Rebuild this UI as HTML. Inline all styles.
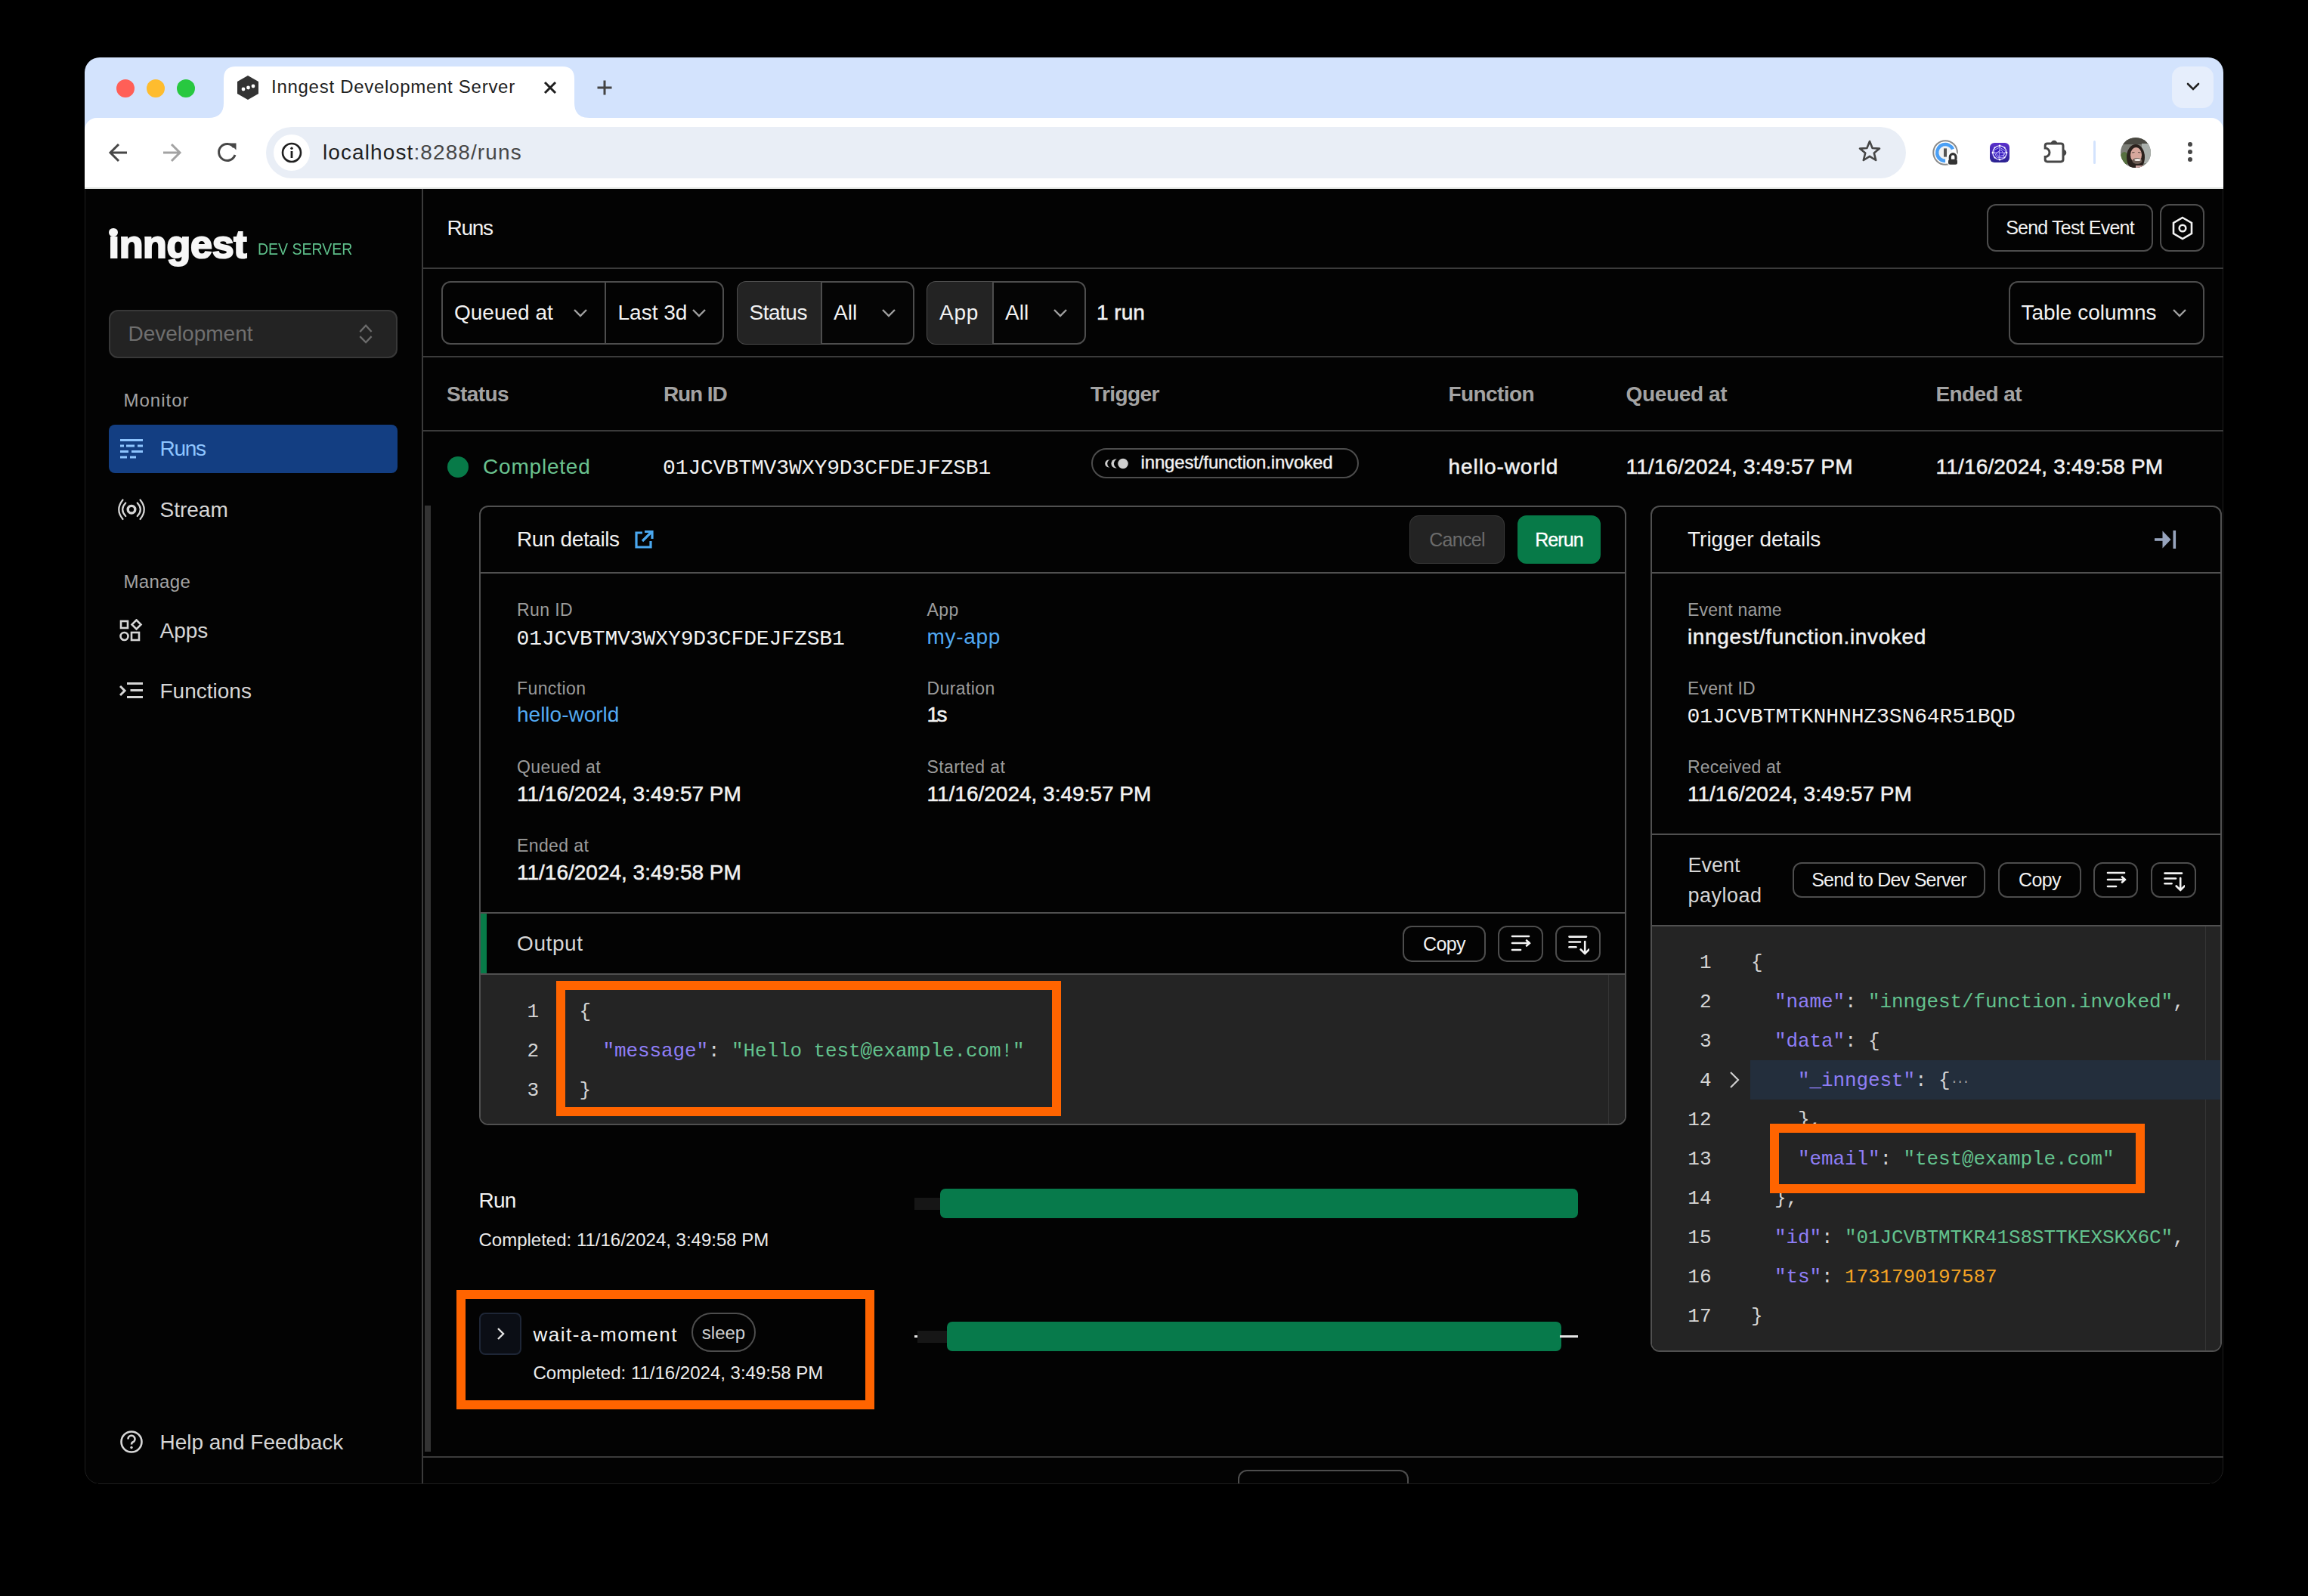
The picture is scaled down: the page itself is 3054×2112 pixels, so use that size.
<!DOCTYPE html>
<html><head><meta charset="utf-8"><title>Inngest Dev Server</title>
<style>
html,body{margin:0;padding:0;background:#000;width:3054px;height:2112px;overflow:hidden;}
.t{position:absolute;white-space:nowrap;}
.s{font-family:"Liberation Sans", sans-serif;}
.m{font-family:"Liberation Mono", monospace;}
.r{position:absolute;}
</style></head><body>
<div class="r" style="left:112.0px;top:76.0px;width:2830.0px;height:1888.0px;background:#030303;border:1px solid #1e1e1e;box-sizing:border-box;border-radius:20px;"></div><div class="r" style="left:112.0px;top:76.0px;width:2830.0px;height:124.0px;background:#d3e3fd;border-radius:20px 20px 0 0;"></div><div class="r" style="left:112.0px;top:156.0px;width:2830.0px;height:93.0px;background:#ffffff;border-radius:16px 16px 0 0;"></div><div class="r" style="left:112.0px;top:248.0px;width:2830.0px;height:2.0px;background:#e1e3e1;"></div><svg class="r" style="left:276px;top:88px;" width="504" height="68" viewBox="0 0 504 68"><path d="M0 68 Q20 68 20 48 L20 16 Q20 0 36 0 L468 0 Q484 0 484 16 L484 48 Q484 68 504 68 Z" fill="#fff"/></svg><div class="r" style="left:154.0px;top:105.0px;width:24.0px;height:24.0px;background:#ff5f57;border-radius:12px;"></div><div class="r" style="left:194.0px;top:105.0px;width:24.0px;height:24.0px;background:#febc2e;border-radius:12px;"></div><div class="r" style="left:234.0px;top:105.0px;width:24.0px;height:24.0px;background:#28c840;border-radius:12px;"></div><svg class="r" style="left:312px;top:99px;" width="32" height="34" viewBox="0 0 32 34"><path d="M16 1 L30 9 L30 25 L16 33 L2 25 L2 9 Z" fill="#333"/><circle cx="10" cy="19" r="2.4" fill="#fff"/><circle cx="16.5" cy="17" r="2.4" fill="#fff"/><circle cx="23" cy="15" r="2.4" fill="#fff"/></svg><div class="t s" style="left:359.0px;top:103.2px;font-size:24px;line-height:24px;color:#1f1f1f;letter-spacing:0.72px;">Inngest Development Server</div><svg class="r" style="left:718px;top:106px;" width="20" height="20" viewBox="0 0 20 20"><path d="M3 3 L17 17 M17 3 L3 17" stroke="#1f1f1f" stroke-width="3"/></svg><svg class="r" style="left:789px;top:105px;" width="22" height="22" viewBox="0 0 22 22"><path d="M11 1.5 L11 20.5 M1.5 11 L20.5 11" stroke="#444" stroke-width="3"/></svg><div class="r" style="left:2874.0px;top:88.0px;width:55.0px;height:55.0px;background:#e6eefc;border-radius:14px;"></div><svg class="r" style="left:2891px;top:107px;" width="22" height="16" viewBox="0 0 22 16"><path d="M4 4 L11 11 L18 4" stroke="#222" stroke-width="2.6" fill="none" stroke-linecap="round"/></svg><svg class="r" style="left:140px;top:186px;" width="34" height="32" viewBox="0 0 34 32"><path d="M28 16 L6 16 M17 5 L6 16 L17 27" stroke="#474747" stroke-width="3" fill="none"/></svg><svg class="r" style="left:212px;top:186px;" width="34" height="32" viewBox="0 0 34 32"><path d="M4 16 L26 16 M15 5 L26 16 L15 27" stroke="#a3a3a3" stroke-width="3" fill="none"/></svg><svg class="r" style="left:284px;top:186px;" width="34" height="32" viewBox="0 0 34 32"><path d="M25.5 9 A11 11 0 1 0 27 19" stroke="#474747" stroke-width="3" fill="none"/><path d="M19.5 3.5 L28.5 3.5 L28.5 12.5 Z" fill="#474747"/></svg><div class="r" style="left:352.0px;top:168.0px;width:2170.0px;height:68.0px;background:#e9eef6;border-radius:34px;"></div><div class="r" style="left:362.0px;top:178.0px;width:48.0px;height:48.0px;background:#ffffff;border-radius:24px;"></div><svg class="r" style="left:372px;top:188px;" width="28" height="28" viewBox="0 0 28 28"><circle cx="14" cy="14" r="12" stroke="#1f1f1f" stroke-width="2.6" fill="none"/><rect x="12.6" y="12" width="2.8" height="9" fill="#1f1f1f"/><circle cx="14" cy="8.3" r="1.7" fill="#1f1f1f"/></svg><div class="t s" style="left:427px;top:188.0px;font-size:28px;line-height:28px;letter-spacing:1.1px;color:#1f1f1f;">localhost<span style="color:#474747">:8288/runs</span></div><svg class="r" style="left:2458px;top:184px;" width="32" height="32" viewBox="0 0 32 32"><path d="M16 3 L19.6 12 L29 12.6 L21.8 18.6 L24.2 28 L16 22.8 L7.8 28 L10.2 18.6 L3 12.6 L12.4 12 Z" stroke="#474747" stroke-width="2.6" fill="none" stroke-linejoin="round"/></svg><svg class="r" style="left:2556px;top:183px;" width="40" height="40" viewBox="0 0 40 40"><circle cx="18.1" cy="19" r="15.8" stroke="#8a8a8a" stroke-width="2" fill="#fff"/><circle cx="18.1" cy="19" r="9" fill="#f2f2f2"/><path d="M28.07 14.35 A11 11 0 1 0 18.1 30" stroke="#4a9ff5" stroke-width="4.5" fill="none"/><rect x="16" y="13.4" width="4" height="11.2" fill="#555"/><path d="M24.3 28 V24.5 A3.85 3.85 0 0 1 32 24.5 V28" stroke="#fff" stroke-width="7" fill="none"/><rect x="21" y="26.7" width="14" height="9" rx="3" fill="#fff"/><path d="M24.3 28 V24.5 A3.85 3.85 0 0 1 32 24.5 V28" stroke="#333" stroke-width="3.2" fill="none"/><rect x="22" y="27.7" width="12" height="7" rx="2.5" fill="#333"/></svg><div class="r" style="left:2633.0px;top:189.0px;width:26.0px;height:26.0px;background:linear-gradient(#5a2fcc,#2a2290);border-radius:6px;"></div><svg class="r" style="left:2633px;top:189px;" width="26" height="26" viewBox="0 0 26 26"><circle cx="13" cy="13" r="9.2" fill="#3a1fc0" stroke="#e2dcff" stroke-width="1.3"/><path d="M5 10 L13 6 L21 11 L17 20 L9 19 Z M8 14 L15 9 L19 16 L12 18 Z M13 4 L12 22 M4 13 L22 13" stroke="#cfc6ff" stroke-width="0.8" fill="none"/><g fill="#fff"><circle cx="13" cy="3.8" r="1.2"/><circle cx="13" cy="22.2" r="1.2"/><circle cx="3.8" cy="13" r="1.2"/><circle cx="22.2" cy="13" r="1.2"/><circle cx="6.5" cy="6.5" r="1"/><circle cx="19.5" cy="6.5" r="1"/><circle cx="6.5" cy="19.5" r="1"/><circle cx="19.5" cy="19.5" r="1"/></g></svg><svg class="r" style="left:2700px;top:180px;" width="40" height="40" viewBox="0 0 40 40"><path d="M9 10.1 H27 Q30 10.1 30 13 V31 Q30 33.9 27 33.9 H9 Q6.2 33.9 6.2 31 V27.6 A5.8 5.8 0 0 0 6.2 16 V13 Q6.2 10.1 9 10.1 Z" stroke="#474747" stroke-width="3" fill="none"/><path d="M13.7 10.1 A4.3 4.3 0 0 1 22.3 10.1 Z" fill="#474747"/><path d="M30 17.7 A4.3 4.3 0 0 1 30 26.3 Z" fill="#474747"/></svg><div class="r" style="left:2770.0px;top:186.0px;width:3.0px;height:31.0px;background:#d3e3fd;border-radius:2px;"></div><svg class="r" style="left:2806px;top:182px;filter:blur(0.5px);" width="40" height="40" viewBox="0 0 40 40"><defs><clipPath id="av"><circle cx="20" cy="20" r="20"/></clipPath></defs><g clip-path="url(#av)"><rect width="40" height="40" fill="#7b7d76"/><rect x="0" y="0" width="40" height="9" fill="#4a4942"/><rect x="28" y="8" width="12" height="26" fill="#aab0ac"/><ellipse cx="5" cy="28" rx="6" ry="9" fill="#56703f"/><ellipse cx="20" cy="26" rx="12" ry="17" fill="#2a211d"/><ellipse cx="20.5" cy="23" rx="7.5" ry="10" fill="#d7a79c"/><ellipse cx="22" cy="31" rx="6.5" ry="4" fill="#6d5d55"/><ellipse cx="22.5" cy="29.5" rx="4.2" ry="1.6" fill="#f2ece8"/><path d="M15 20 L18.5 19.5 M23 19.5 L26.5 20" stroke="#5b4a44" stroke-width="1.2"/><rect x="20" y="37" width="14" height="5" fill="#c9a3a0"/></g></svg><div class="r" style="left:2895.0px;top:188.0px;width:6.0px;height:6.0px;background:#474747;border-radius:3px;"></div><div class="r" style="left:2895.0px;top:198.0px;width:6.0px;height:6.0px;background:#474747;border-radius:3px;"></div><div class="r" style="left:2895.0px;top:208.0px;width:6.0px;height:6.0px;background:#474747;border-radius:3px;"></div><div class="r" style="left:558.0px;top:250.0px;width:2.0px;height:1713.0px;background:#3b3b3b;"></div><div class="t s" style="left:143.5px;top:296.5px;font-size:52px;line-height:52px;color:#f6f6f6;font-weight:700;letter-spacing:-0.3px;-webkit-text-stroke:2.2px #f6f6f6;">inngest</div><div class="r" style="left:142.0px;top:299.0px;width:16.0px;height:13.0px;background:#030303;"></div><div class="r" style="left:144.4px;top:301.7px;width:11.4px;height:11.4px;background:#f6f6f6;border-radius:6px;"></div><div class="t s" style="left:340.5px;top:318.4px;font-size:22.7px;line-height:22.7px;color:#5ebf8a;transform:scaleX(0.86);transform-origin:0 0;">DEV SERVER</div><div class="r" style="left:144.0px;top:410.0px;width:382.0px;height:64.0px;background:#232323;border:2px solid #383838;box-sizing:border-box;border-radius:12px;"></div><div class="t s" style="left:169.5px;top:428.3px;font-size:28px;line-height:28px;color:#6f6f6f;">Development</div><svg class="r" style="left:474px;top:428px;" width="20" height="28" viewBox="0 0 20 28"><path d="M2.3 11.1 L10.1 2.8 L17.6 11.1 M2.3 17.1 L10.1 25.1 L17.6 17.1" stroke="#6b6b6b" stroke-width="2.3" fill="none"/></svg><div class="t s" style="left:163.5px;top:517.7px;font-size:24px;line-height:24px;color:#a3a3a3;letter-spacing:1.0px;">Monitor</div><div class="r" style="left:144.0px;top:562.0px;width:382.0px;height:64.0px;background:#133e82;border-radius:8px;"></div><svg class="r" style="left:158px;top:580px;" width="32" height="28" viewBox="0 0 32 28"><g stroke="#8ec5ff" stroke-width="3"><path d="M1 2.5 H31"/><path d="M1 10 H6 M9 10 H20 M24 10 H31"/><path d="M1 17.5 H12 M16 17.5 H31"/><path d="M1 25 H10 M14 25 H22"/></g></svg><div class="t s" style="left:211.5px;top:580.3px;font-size:28px;line-height:28px;color:#8ec5ff;letter-spacing:-1.3px;">Runs</div><svg class="r" style="left:150px;top:655px;" width="50" height="40" viewBox="0 0 50 40"><circle cx="24" cy="19.2" r="4.8" stroke="#d6d6d6" stroke-width="3.4" fill="none"/><path d="M16.3 10.5 Q7.9 19.25 16.3 28 M31.7 10.5 Q40.1 19.25 31.7 28" stroke="#d6d6d6" stroke-width="2.2" fill="none" stroke-linecap="round"/><path d="M12.5 6.5 Q2 19.25 12.5 32 M35.5 6.5 Q46 19.25 35.5 32" stroke="#d6d6d6" stroke-width="2.2" fill="none" stroke-linecap="round"/></svg><div class="t s" style="left:211.5px;top:660.8px;font-size:28px;line-height:28px;color:#d6d6d6;">Stream</div><div class="t s" style="left:163.5px;top:757.7px;font-size:24px;line-height:24px;color:#a3a3a3;letter-spacing:0.3px;">Manage</div><svg class="r" style="left:158px;top:819px;" width="32" height="32" viewBox="0 0 32 32"><g stroke="#d6d6d6" stroke-width="2.6" fill="none"><rect x="2" y="3" width="9" height="9"/><path d="M22.5 1.5 L28.5 7.5 L22.5 13.5 L16.5 7.5 Z"/><circle cx="6.5" cy="23" r="5"/><rect x="16" y="18" width="10" height="10"/></g></svg><div class="t s" style="left:211.5px;top:820.8px;font-size:28px;line-height:28px;color:#d6d6d6;">Apps</div><svg class="r" style="left:158px;top:902px;" width="34" height="26" viewBox="0 0 34 26"><g stroke="#d6d6d6" stroke-width="3" fill="none"><path d="M1 6 L7 12 L1 18"/><path d="M10 2.5 H31 M14.5 11.5 H31 M10 20.5 H31"/></g></svg><div class="t s" style="left:211.5px;top:900.8px;font-size:28px;line-height:28px;color:#d6d6d6;">Functions</div><svg class="r" style="left:158px;top:1892px;" width="32" height="32" viewBox="0 0 32 32"><circle cx="16" cy="16" r="13.5" stroke="#d6d6d6" stroke-width="2.6" fill="none"/><path d="M11.5 12.5 A4.5 4.5 0 1 1 17.5 16.5 Q16 17.3 16 19.5" stroke="#d6d6d6" stroke-width="2.6" fill="none"/><circle cx="16" cy="23.5" r="1.7" fill="#d6d6d6"/></svg><div class="t s" style="left:211.5px;top:1895.3px;font-size:28px;line-height:28px;color:#d6d6d6;">Help and Feedback</div><div class="t s" style="left:591.5px;top:288.3px;font-size:28px;line-height:28px;color:#f2f2f2;letter-spacing:-1.3px;">Runs</div><div class="r" style="left:560.0px;top:354.0px;width:2382.0px;height:2.0px;background:#3b3b3b;"></div><div class="r" style="left:2629.0px;top:270.0px;width:220.0px;height:63.0px;border:2px solid #4d4d4d;box-sizing:border-box;border-radius:12px;"></div><div class="t s" style="left:2739.0px;top:288.8px;font-size:25px;line-height:25px;color:#f2f2f2;letter-spacing:-0.8px;transform:translateX(-50%);">Send Test Event</div><div class="r" style="left:2858.0px;top:270.0px;width:59.0px;height:63.0px;border:2px solid #4d4d4d;box-sizing:border-box;border-radius:12px;"></div><svg class="r" style="left:2873px;top:286px;" width="30" height="32" viewBox="0 0 30 32"><path d="M15 2 L27 9 L27 23 L15 30 L3 23 L3 9 Z" stroke="#f2f2f2" stroke-width="2.6" fill="none" stroke-linejoin="miter"/><circle cx="15" cy="16" r="4.3" stroke="#f2f2f2" stroke-width="2.6" fill="none"/></svg><div class="r" style="left:584.0px;top:372.0px;width:374.0px;height:84.0px;border:2px solid #4d4d4d;box-sizing:border-box;border-radius:12px;"></div><div class="r" style="left:800.0px;top:372.0px;width:2.0px;height:84.0px;background:#4d4d4d;"></div><div class="t s" style="left:601.0px;top:400.3px;font-size:28px;line-height:28px;color:#f2f2f2;">Queued at</div><svg class="r" style="left:758px;top:407px;" width="20" height="14" viewBox="0 0 20 14"><path d="M2.0 3 L10 11.0 L18.0 3" stroke="#a0a0a0" stroke-width="2.4" fill="none"/></svg><div class="t s" style="left:817.5px;top:400.3px;font-size:28px;line-height:28px;color:#f2f2f2;">Last 3d</div><svg class="r" style="left:915px;top:407px;" width="20" height="14" viewBox="0 0 20 14"><path d="M2.0 3 L10 11.0 L18.0 3" stroke="#a0a0a0" stroke-width="2.4" fill="none"/></svg><div class="r" style="left:975.0px;top:372.0px;width:235.0px;height:84.0px;background:#050505;border:2px solid #4d4d4d;box-sizing:border-box;border-radius:12px;"></div><div class="r" style="left:976.0px;top:373.0px;width:111.0px;height:82.0px;background:#232323;border-radius:11px 0 0 11px;"></div><div class="r" style="left:1086.0px;top:372.0px;width:2.0px;height:84.0px;background:#4d4d4d;"></div><div class="t s" style="left:991.5px;top:400.3px;font-size:28px;line-height:28px;color:#f2f2f2;letter-spacing:-0.5px;">Status</div><div class="t s" style="left:1103.0px;top:400.3px;font-size:28px;line-height:28px;color:#f2f2f2;">All</div><svg class="r" style="left:1166px;top:407px;" width="20" height="14" viewBox="0 0 20 14"><path d="M2.0 3 L10 11.0 L18.0 3" stroke="#a0a0a0" stroke-width="2.4" fill="none"/></svg><div class="r" style="left:1226.0px;top:372.0px;width:211.0px;height:84.0px;background:#050505;border:2px solid #4d4d4d;box-sizing:border-box;border-radius:12px;"></div><div class="r" style="left:1227.0px;top:373.0px;width:87.0px;height:82.0px;background:#232323;border-radius:11px 0 0 11px;"></div><div class="r" style="left:1313.0px;top:372.0px;width:2.0px;height:84.0px;background:#4d4d4d;"></div><div class="t s" style="left:1243.0px;top:400.3px;font-size:28px;line-height:28px;color:#f2f2f2;letter-spacing:0.7px;">App</div><div class="t s" style="left:1330.0px;top:400.3px;font-size:28px;line-height:28px;color:#f2f2f2;">All</div><svg class="r" style="left:1393px;top:407px;" width="20" height="14" viewBox="0 0 20 14"><path d="M2.0 3 L10 11.0 L18.0 3" stroke="#a0a0a0" stroke-width="2.4" fill="none"/></svg><div class="t s" style="left:1451.0px;top:400.3px;font-size:28px;line-height:28px;color:#f2f2f2;-webkit-text-stroke:0.5px #f2f2f2;">1 run</div><div class="r" style="left:2658.0px;top:372.0px;width:259.0px;height:84.0px;border:2px solid #4d4d4d;box-sizing:border-box;border-radius:12px;"></div><div class="t s" style="left:2674.5px;top:400.3px;font-size:28px;line-height:28px;color:#f2f2f2;">Table columns</div><svg class="r" style="left:2874px;top:407px;" width="20" height="14" viewBox="0 0 20 14"><path d="M2.0 3 L10 11.0 L18.0 3" stroke="#a0a0a0" stroke-width="2.4" fill="none"/></svg><div class="r" style="left:560.0px;top:471.0px;width:2382.0px;height:2.0px;background:#3b3b3b;"></div><div class="t s" style="left:591.0px;top:508.3px;font-size:28px;line-height:28px;color:#a3a3a3;font-weight:700;letter-spacing:-0.6px;">Status</div><div class="t s" style="left:878.0px;top:508.3px;font-size:28px;line-height:28px;color:#a3a3a3;font-weight:700;letter-spacing:-1.1px;">Run ID</div><div class="t s" style="left:1443.0px;top:508.3px;font-size:28px;line-height:28px;color:#a3a3a3;font-weight:700;letter-spacing:-0.6px;">Trigger</div><div class="t s" style="left:1916.5px;top:508.3px;font-size:28px;line-height:28px;color:#a3a3a3;font-weight:700;letter-spacing:-0.6px;">Function</div><div class="t s" style="left:2151.5px;top:508.3px;font-size:28px;line-height:28px;color:#a3a3a3;font-weight:700;letter-spacing:-0.35px;">Queued at</div><div class="t s" style="left:2561.5px;top:508.3px;font-size:28px;line-height:28px;color:#a3a3a3;font-weight:700;letter-spacing:-0.6px;">Ended at</div><div class="r" style="left:560.0px;top:569.0px;width:2382.0px;height:2.0px;background:#3b3b3b;"></div><div class="r" style="left:592.0px;top:604.0px;width:28.0px;height:28.0px;background:#077a48;border-radius:14px;"></div><div class="t s" style="left:639.0px;top:603.8px;font-size:28px;line-height:28px;color:#6ac28f;letter-spacing:0.8px;">Completed</div><div class="t m" style="left:877.0px;top:606.1px;font-size:28px;line-height:28px;color:#f2f2f2;letter-spacing:-0.1px;">01JCVBTMV3WXY9D3CFDEJFZSB1</div><div class="r" style="left:1444.0px;top:593.0px;width:354.0px;height:40.0px;border:2px solid #4d4d4d;box-sizing:border-box;border-radius:20px;"></div><svg class="r" style="left:1456px;top:603px;" width="44" height="22" viewBox="0 0 44 22"><circle cx="11.2" cy="10.5" r="5" fill="#d0d0d0"/><circle cx="14.7" cy="10.5" r="5.5" fill="#030303"/><circle cx="20.4" cy="10.5" r="6" fill="#d0d0d0"/><circle cx="24.4" cy="10.5" r="6.5" fill="#030303"/><circle cx="30" cy="10.5" r="7.4" fill="#d0d0d0" stroke="#030303" stroke-width="1.2"/></svg><div class="t s" style="left:1509.5px;top:600.2px;font-size:24px;line-height:24px;color:#f2f2f2;letter-spacing:-0.15px;-webkit-text-stroke:0.4px #f2f2f2;">inngest/function.invoked</div><div class="t s" style="left:1916.5px;top:603.8px;font-size:28px;line-height:28px;color:#f2f2f2;letter-spacing:0.95px;-webkit-text-stroke:0.5px #f2f2f2;">hello-world</div><div class="t s" style="left:2151.5px;top:603.8px;font-size:28px;line-height:28px;color:#f2f2f2;letter-spacing:0.15px;-webkit-text-stroke:0.5px #f2f2f2;">11/16/2024, 3:49:57 PM</div><div class="t s" style="left:2561.5px;top:603.8px;font-size:28px;line-height:28px;color:#f2f2f2;letter-spacing:0.18px;-webkit-text-stroke:0.5px #f2f2f2;">11/16/2024, 3:49:58 PM</div><div class="r" style="left:562.0px;top:669.0px;width:8.0px;height:1252.0px;background:#333333;"></div><div class="r" style="left:634.0px;top:669.0px;width:1518.0px;height:820.0px;border:2px solid #505050;box-sizing:border-box;border-radius:12px;"></div><div class="t s" style="left:684.0px;top:700.3px;font-size:28px;line-height:28px;color:#f2f2f2;letter-spacing:-0.4px;">Run details</div><svg class="r" style="left:838px;top:700px;" width="28" height="28" viewBox="0 0 28 28"><path d="M12 5 L4 5 L4 24 L23 24 L23 16" stroke="#4aa8f0" stroke-width="3.2" fill="none"/><path d="M12 16 L24 4 M15 3.5 L25 3.5 L25 13" stroke="#4aa8f0" stroke-width="3.2" fill="none"/></svg><div class="r" style="left:1865.0px;top:682.0px;width:126.0px;height:64.0px;background:#232323;border:1.5px solid #3a3a3a;box-sizing:border-box;border-radius:12px;"></div><div class="t s" style="left:1928.0px;top:701.8px;font-size:25px;line-height:25px;color:#6b6b6b;letter-spacing:-0.7px;transform:translateX(-50%);">Cancel</div><div class="r" style="left:2008.0px;top:682.0px;width:110.0px;height:64.0px;background:#077a48;border-radius:12px;"></div><div class="t s" style="left:2063.0px;top:701.8px;font-size:25px;line-height:25px;color:#ffffff;letter-spacing:-0.9px;transform:translateX(-50%);-webkit-text-stroke:0.3px #fff;">Rerun</div><div class="r" style="left:636.0px;top:757.0px;width:1514.0px;height:2.0px;background:#505050;"></div><div class="t s" style="left:684.0px;top:795.5px;font-size:23px;line-height:23px;color:#9b9b9b;letter-spacing:0.4px;">Run ID</div><div class="t m" style="left:683.5px;top:831.6px;font-size:28px;line-height:28px;color:#f2f2f2;letter-spacing:-0.1px;">01JCVBTMV3WXY9D3CFDEJFZSB1</div><div class="t s" style="left:1226.5px;top:795.5px;font-size:23px;line-height:23px;color:#9b9b9b;letter-spacing:0.4px;">App</div><div class="t s" style="left:1226.5px;top:829.3px;font-size:28px;line-height:28px;color:#52a9f2;letter-spacing:0.7px;">my-app</div><div class="t s" style="left:684.0px;top:899.5px;font-size:23px;line-height:23px;color:#9b9b9b;letter-spacing:0.4px;">Function</div><div class="t s" style="left:684.0px;top:932.3px;font-size:28px;line-height:28px;color:#52a9f2;">hello-world</div><div class="t s" style="left:1226.5px;top:899.5px;font-size:23px;line-height:23px;color:#9b9b9b;letter-spacing:0.4px;">Duration</div><div class="t s" style="left:1226.5px;top:932.3px;font-size:28px;line-height:28px;color:#f2f2f2;letter-spacing:-2.5px;-webkit-text-stroke:0.5px #f2f2f2;">1s</div><div class="t s" style="left:684.0px;top:1003.5px;font-size:23px;line-height:23px;color:#9b9b9b;letter-spacing:0.4px;">Queued at</div><div class="t s" style="left:684.0px;top:1037.3px;font-size:28px;line-height:28px;color:#f2f2f2;-webkit-text-stroke:0.5px #f2f2f2;">11/16/2024, 3:49:57 PM</div><div class="t s" style="left:1226.5px;top:1003.5px;font-size:23px;line-height:23px;color:#9b9b9b;letter-spacing:0.4px;">Started at</div><div class="t s" style="left:1226.5px;top:1037.3px;font-size:28px;line-height:28px;color:#f2f2f2;-webkit-text-stroke:0.5px #f2f2f2;">11/16/2024, 3:49:57 PM</div><div class="t s" style="left:684.0px;top:1107.5px;font-size:23px;line-height:23px;color:#9b9b9b;letter-spacing:0.4px;">Ended at</div><div class="t s" style="left:684.0px;top:1141.3px;font-size:28px;line-height:28px;color:#f2f2f2;-webkit-text-stroke:0.5px #f2f2f2;">11/16/2024, 3:49:58 PM</div><div class="r" style="left:636.0px;top:1207.0px;width:1514.0px;height:2.0px;background:#505050;"></div><div class="r" style="left:636.0px;top:1209.0px;width:8.0px;height:80.0px;background:#077a48;"></div><div class="t s" style="left:684.0px;top:1235.3px;font-size:28px;line-height:28px;color:#d6d6d6;letter-spacing:0.6px;">Output</div><div class="r" style="left:1856.0px;top:1225.0px;width:110.0px;height:48.0px;border:2px solid #4d4d4d;box-sizing:border-box;border-radius:12px;"></div><div class="t s" style="left:1911.0px;top:1236.8px;font-size:25px;line-height:25px;color:#f2f2f2;letter-spacing:-0.6px;transform:translateX(-50%);">Copy</div><div class="r" style="left:1982.0px;top:1225.0px;width:60.0px;height:48.0px;border:2px solid #4d4d4d;box-sizing:border-box;border-radius:12px;"></div><svg class="r" style="left:1999px;top:1236px;" width="28" height="26" viewBox="0 0 28 26"><g stroke="#f2f2f2" stroke-width="2.6" fill="none" stroke-linecap="round"><path d="M2 3 H24"/><path d="M2 12 H25 M21 8.5 L25 12 L21 15.5"/><path d="M2 21 H13"/></g></svg><div class="r" style="left:2058.0px;top:1225.0px;width:60.0px;height:48.0px;border:2px solid #4d4d4d;box-sizing:border-box;border-radius:12px;"></div><svg class="r" style="left:2073px;top:1235px;" width="30" height="30" viewBox="0 0 30 30"><g stroke="#f2f2f2" stroke-width="2.6" fill="none" stroke-linecap="round"><path d="M3.5 4.6 H26"/><path d="M3.5 11.5 H18"/><path d="M3.5 18.3 H12.5"/><path d="M24.2 11 V27 M18.7 21.5 L24.2 27 L29.7 21.5"/></g></svg><div class="r" style="left:636.0px;top:1289.0px;width:1514.0px;height:198.0px;background:#242424;border-radius:0 0 10px 10px;"></div><div class="r" style="left:636.0px;top:1288.0px;width:1514.0px;height:2.0px;background:#505050;"></div><div class="r" style="left:2128.0px;top:1290.0px;width:1.0px;height:197.0px;background:#353535;"></div><div class="t m" style="right:2341.0px;top:1325.6px;font-size:26px;line-height:26px;color:#d6d6d6;">1</div><div class="t m" style="left:766.5px;top:1325.6px;font-size:26px;line-height:26px;color:#d6d6d6;letter-spacing:-0.1px;">{</div><div class="t m" style="right:2341.0px;top:1377.8px;font-size:26px;line-height:26px;color:#d6d6d6;">2</div><div class="t m" style="left:766.5px;top:1377.8px;font-size:26px;line-height:26px;color:#d6d6d6;letter-spacing:-0.1px;">&nbsp;&nbsp;<span style="color:#8f7ef6">"message"</span>: <span style="color:#63c28e">"Hello test@example.com!"</span></div><div class="t m" style="right:2341.0px;top:1430.1px;font-size:26px;line-height:26px;color:#d6d6d6;">3</div><div class="t m" style="left:766.5px;top:1430.1px;font-size:26px;line-height:26px;color:#d6d6d6;letter-spacing:-0.1px;">}</div><div class="t s" style="left:633.5px;top:1575.3px;font-size:28px;line-height:28px;color:#f2f2f2;letter-spacing:-0.8px;">Run</div><div class="t s" style="left:633.5px;top:1628.7px;font-size:24px;line-height:24px;color:#ececec;">Completed: 11/16/2024, 3:49:58 PM</div><div class="r" style="left:1210.0px;top:1585.0px;width:36.0px;height:16.0px;background:#161616;"></div><div class="r" style="left:1244.0px;top:1573.0px;width:844.0px;height:39.0px;background:#077a4b;border-radius:7px;"></div><div class="r" style="left:634.0px;top:1737.0px;width:56.0px;height:56.0px;background:#0b0e15;border:2px solid #1e2636;box-sizing:border-box;border-radius:8px;"></div><svg class="r" style="left:652px;top:1755px;" width="20" height="20" viewBox="0 0 20 20"><path d="M7 3 L14 10 L7 17" stroke="#e5e5e5" stroke-width="2.4" fill="none"/></svg><div class="t s" style="left:705.5px;top:1753.0px;font-size:26px;line-height:26px;color:#f2f2f2;letter-spacing:1.5px;">wait-a-moment</div><div class="r" style="left:915.0px;top:1737.0px;width:85.0px;height:52.0px;border:2px solid #4d4d4d;box-sizing:border-box;border-radius:26px;"></div><div class="t s" style="left:957.5px;top:1751.7px;font-size:24px;line-height:24px;color:#cfcfcf;transform:translateX(-50%);">sleep</div><div class="t s" style="left:705.5px;top:1804.7px;font-size:24px;line-height:24px;color:#ececec;">Completed: 11/16/2024, 3:49:58 PM</div><div class="r" style="left:1210.0px;top:1767.0px;width:6.0px;height:2.5px;background:#e5e5e5;"></div><div class="r" style="left:1214.0px;top:1761.0px;width:41.0px;height:16.0px;background:#161616;"></div><div class="r" style="left:1253.0px;top:1749.0px;width:813.0px;height:39.0px;background:#077a4b;border-radius:7px;"></div><div class="r" style="left:2064.0px;top:1767.0px;width:24.0px;height:2.5px;background:#e5e5e5;"></div><div class="r" style="left:2184.0px;top:669.0px;width:756.0px;height:1120.0px;border:2px solid #505050;box-sizing:border-box;border-radius:12px;"></div><div class="t s" style="left:2233.0px;top:700.3px;font-size:28px;line-height:28px;color:#f2f2f2;">Trigger details</div><svg class="r" style="left:2849px;top:700px;" width="34" height="28" viewBox="0 0 34 28"><path d="M2 14 H13" stroke="#97a4bd" stroke-width="3.6"/><path d="M12.5 2.5 L23.5 14 L12.5 25.5 Z" fill="#97a4bd"/><rect x="26.5" y="2" width="3.6" height="24" fill="#97a4bd"/></svg><div class="r" style="left:2186.0px;top:757.0px;width:752.0px;height:2.0px;background:#505050;"></div><div class="t s" style="left:2233.0px;top:795.5px;font-size:23px;line-height:23px;color:#9b9b9b;letter-spacing:0.2px;">Event name</div><div class="t s" style="left:2233.0px;top:829.3px;font-size:28px;line-height:28px;color:#f2f2f2;letter-spacing:0.65px;-webkit-text-stroke:0.5px #f2f2f2;">inngest/function.invoked</div><div class="t s" style="left:2233.0px;top:899.5px;font-size:23px;line-height:23px;color:#9b9b9b;letter-spacing:0.2px;">Event ID</div><div class="t m" style="left:2232.5px;top:934.6px;font-size:28px;line-height:28px;color:#f2f2f2;letter-spacing:-0.1px;">01JCVBTMTKNHNHZ3SN64R51BQD</div><div class="t s" style="left:2233.0px;top:1003.5px;font-size:23px;line-height:23px;color:#9b9b9b;letter-spacing:0.2px;">Received at</div><div class="t s" style="left:2233.0px;top:1037.3px;font-size:28px;line-height:28px;color:#f2f2f2;-webkit-text-stroke:0.5px #f2f2f2;">11/16/2024, 3:49:57 PM</div><div class="r" style="left:2186.0px;top:1103.0px;width:752.0px;height:2.0px;background:#505050;"></div><div class="t s" style="left:2233.5px;top:1132.1px;font-size:27px;line-height:27px;color:#d6d6d6;">Event</div><div class="t s" style="left:2233.5px;top:1171.9px;font-size:27px;line-height:27px;color:#d6d6d6;letter-spacing:0.5px;">payload</div><div class="r" style="left:2372.0px;top:1141.0px;width:255.0px;height:47.0px;border:2px solid #4d4d4d;box-sizing:border-box;border-radius:12px;"></div><div class="t s" style="left:2499.5px;top:1151.8px;font-size:25px;line-height:25px;color:#f2f2f2;letter-spacing:-0.75px;transform:translateX(-50%);">Send to Dev Server</div><div class="r" style="left:2644.0px;top:1141.0px;width:110.0px;height:47.0px;border:2px solid #4d4d4d;box-sizing:border-box;border-radius:12px;"></div><div class="t s" style="left:2699.0px;top:1151.8px;font-size:25px;line-height:25px;color:#f2f2f2;letter-spacing:-0.6px;transform:translateX(-50%);">Copy</div><div class="r" style="left:2770.0px;top:1141.0px;width:59.0px;height:47.0px;border:2px solid #4d4d4d;box-sizing:border-box;border-radius:12px;"></div><svg class="r" style="left:2787px;top:1152px;" width="28" height="26" viewBox="0 0 28 26"><g stroke="#f2f2f2" stroke-width="2.6" fill="none" stroke-linecap="round"><path d="M2 3 H24"/><path d="M2 12 H25 M21 8.5 L25 12 L21 15.5"/><path d="M2 21 H13"/></g></svg><div class="r" style="left:2846.0px;top:1141.0px;width:60.0px;height:47.0px;border:2px solid #4d4d4d;box-sizing:border-box;border-radius:12px;"></div><svg class="r" style="left:2861px;top:1151px;" width="30" height="30" viewBox="0 0 30 30"><g stroke="#f2f2f2" stroke-width="2.6" fill="none" stroke-linecap="round"><path d="M3.5 4.6 H26"/><path d="M3.5 11.5 H18"/><path d="M3.5 18.3 H12.5"/><path d="M24.2 11 V27 M18.7 21.5 L24.2 27 L29.7 21.5"/></g></svg><div class="r" style="left:2186.0px;top:1225.0px;width:752.0px;height:562.0px;background:#242424;border-radius:0 0 10px 10px;"></div><div class="r" style="left:2186.0px;top:1224.0px;width:752.0px;height:2.0px;background:#505050;"></div><div class="r" style="left:2918.0px;top:1226.0px;width:1.0px;height:561.0px;background:#353535;"></div><div class="r" style="left:2316.0px;top:1403.0px;width:622.0px;height:52.0px;background:#232e3c;"></div><div class="t m" style="right:789.5px;top:1261.1px;font-size:26px;line-height:26px;color:#d6d6d6;">1</div><div class="t m" style="left:2316.9px;top:1261.1px;font-size:26px;line-height:26px;color:#d6d6d6;letter-spacing:-0.1px;">{</div><div class="t m" style="right:789.5px;top:1313.1px;font-size:26px;line-height:26px;color:#d6d6d6;">2</div><div class="t m" style="left:2316.9px;top:1313.1px;font-size:26px;line-height:26px;color:#d6d6d6;letter-spacing:-0.1px;">&nbsp;&nbsp;<span style="color:#8f7ef6">"name"</span>: <span style="color:#63c28e">"inngest/function.invoked"</span>,</div><div class="t m" style="right:789.5px;top:1365.1px;font-size:26px;line-height:26px;color:#d6d6d6;">3</div><div class="t m" style="left:2316.9px;top:1365.1px;font-size:26px;line-height:26px;color:#d6d6d6;letter-spacing:-0.1px;">&nbsp;&nbsp;<span style="color:#8f7ef6">"data"</span>: {</div><div class="t m" style="right:789.5px;top:1417.1px;font-size:26px;line-height:26px;color:#d6d6d6;">4</div><div class="t m" style="left:2316.9px;top:1417.1px;font-size:26px;line-height:26px;color:#d6d6d6;letter-spacing:-0.1px;">&nbsp;&nbsp;&nbsp;&nbsp;<span style="color:#8f7ef6">"_inngest"</span>: {<span style="color:#9a9a9a;font-size:18px;letter-spacing:-3px;">&middot;&middot;&middot;</span></div><div class="t m" style="right:789.5px;top:1469.1px;font-size:26px;line-height:26px;color:#d6d6d6;">12</div><div class="t m" style="left:2316.9px;top:1469.1px;font-size:26px;line-height:26px;color:#d6d6d6;letter-spacing:-0.1px;">&nbsp;&nbsp;&nbsp;&nbsp;},</div><div class="t m" style="right:789.5px;top:1521.1px;font-size:26px;line-height:26px;color:#d6d6d6;">13</div><div class="t m" style="left:2316.9px;top:1521.1px;font-size:26px;line-height:26px;color:#d6d6d6;letter-spacing:-0.1px;">&nbsp;&nbsp;&nbsp;&nbsp;<span style="color:#8f7ef6">"email"</span>: <span style="color:#63c28e">"test@example.com"</span></div><div class="t m" style="right:789.5px;top:1573.1px;font-size:26px;line-height:26px;color:#d6d6d6;">14</div><div class="t m" style="left:2316.9px;top:1573.1px;font-size:26px;line-height:26px;color:#d6d6d6;letter-spacing:-0.1px;">&nbsp;&nbsp;},</div><div class="t m" style="right:789.5px;top:1625.1px;font-size:26px;line-height:26px;color:#d6d6d6;">15</div><div class="t m" style="left:2316.9px;top:1625.1px;font-size:26px;line-height:26px;color:#d6d6d6;letter-spacing:-0.1px;">&nbsp;&nbsp;<span style="color:#8f7ef6">"id"</span>: <span style="color:#63c28e">"01JCVBTMTKR41S8STTKEXSKX6C"</span>,</div><div class="t m" style="right:789.5px;top:1677.1px;font-size:26px;line-height:26px;color:#d6d6d6;">16</div><div class="t m" style="left:2316.9px;top:1677.1px;font-size:26px;line-height:26px;color:#d6d6d6;letter-spacing:-0.1px;">&nbsp;&nbsp;<span style="color:#8f7ef6">"ts"</span>: <span style="color:#f5a524">1731790197587</span></div><div class="t m" style="right:789.5px;top:1729.1px;font-size:26px;line-height:26px;color:#d6d6d6;">17</div><div class="t m" style="left:2316.9px;top:1729.1px;font-size:26px;line-height:26px;color:#d6d6d6;letter-spacing:-0.1px;">}</div><svg class="r" style="left:2286px;top:1416px;" width="18" height="26" viewBox="0 0 18 26"><path d="M4 3 L14 13 L4 23" stroke="#cfcfcf" stroke-width="2.2" fill="none"/></svg><div class="r" style="left:560.0px;top:1927.0px;width:2382.0px;height:2.0px;background:#3b3b3b;"></div><div class="r" style="left:1638.0px;top:1945.0px;width:226.0px;height:30.0px;border:2px solid #4d4d4d;box-sizing:border-box;border-radius:12px;border-bottom:none;"></div><div class="r" style="left:112.0px;top:1963.0px;width:2830.0px;height:27.0px;background:#000;"></div><div class="r" style="left:130.0px;top:1962.5px;width:2794.0px;height:1.5px;background:#1e1e1e;"></div><div class="r" style="left:736.4px;top:1298.3px;width:667.4px;height:178.4px;border:12.5px solid #ff6400;box-sizing:border-box;"></div><div class="r" style="left:604.0px;top:1706.8px;width:553.0px;height:158.2px;border:12.5px solid #ff6400;box-sizing:border-box;"></div><div class="r" style="left:2342.0px;top:1487.3px;width:496.0px;height:91.9px;border:12.5px solid #ff6400;box-sizing:border-box;"></div></body></html>
